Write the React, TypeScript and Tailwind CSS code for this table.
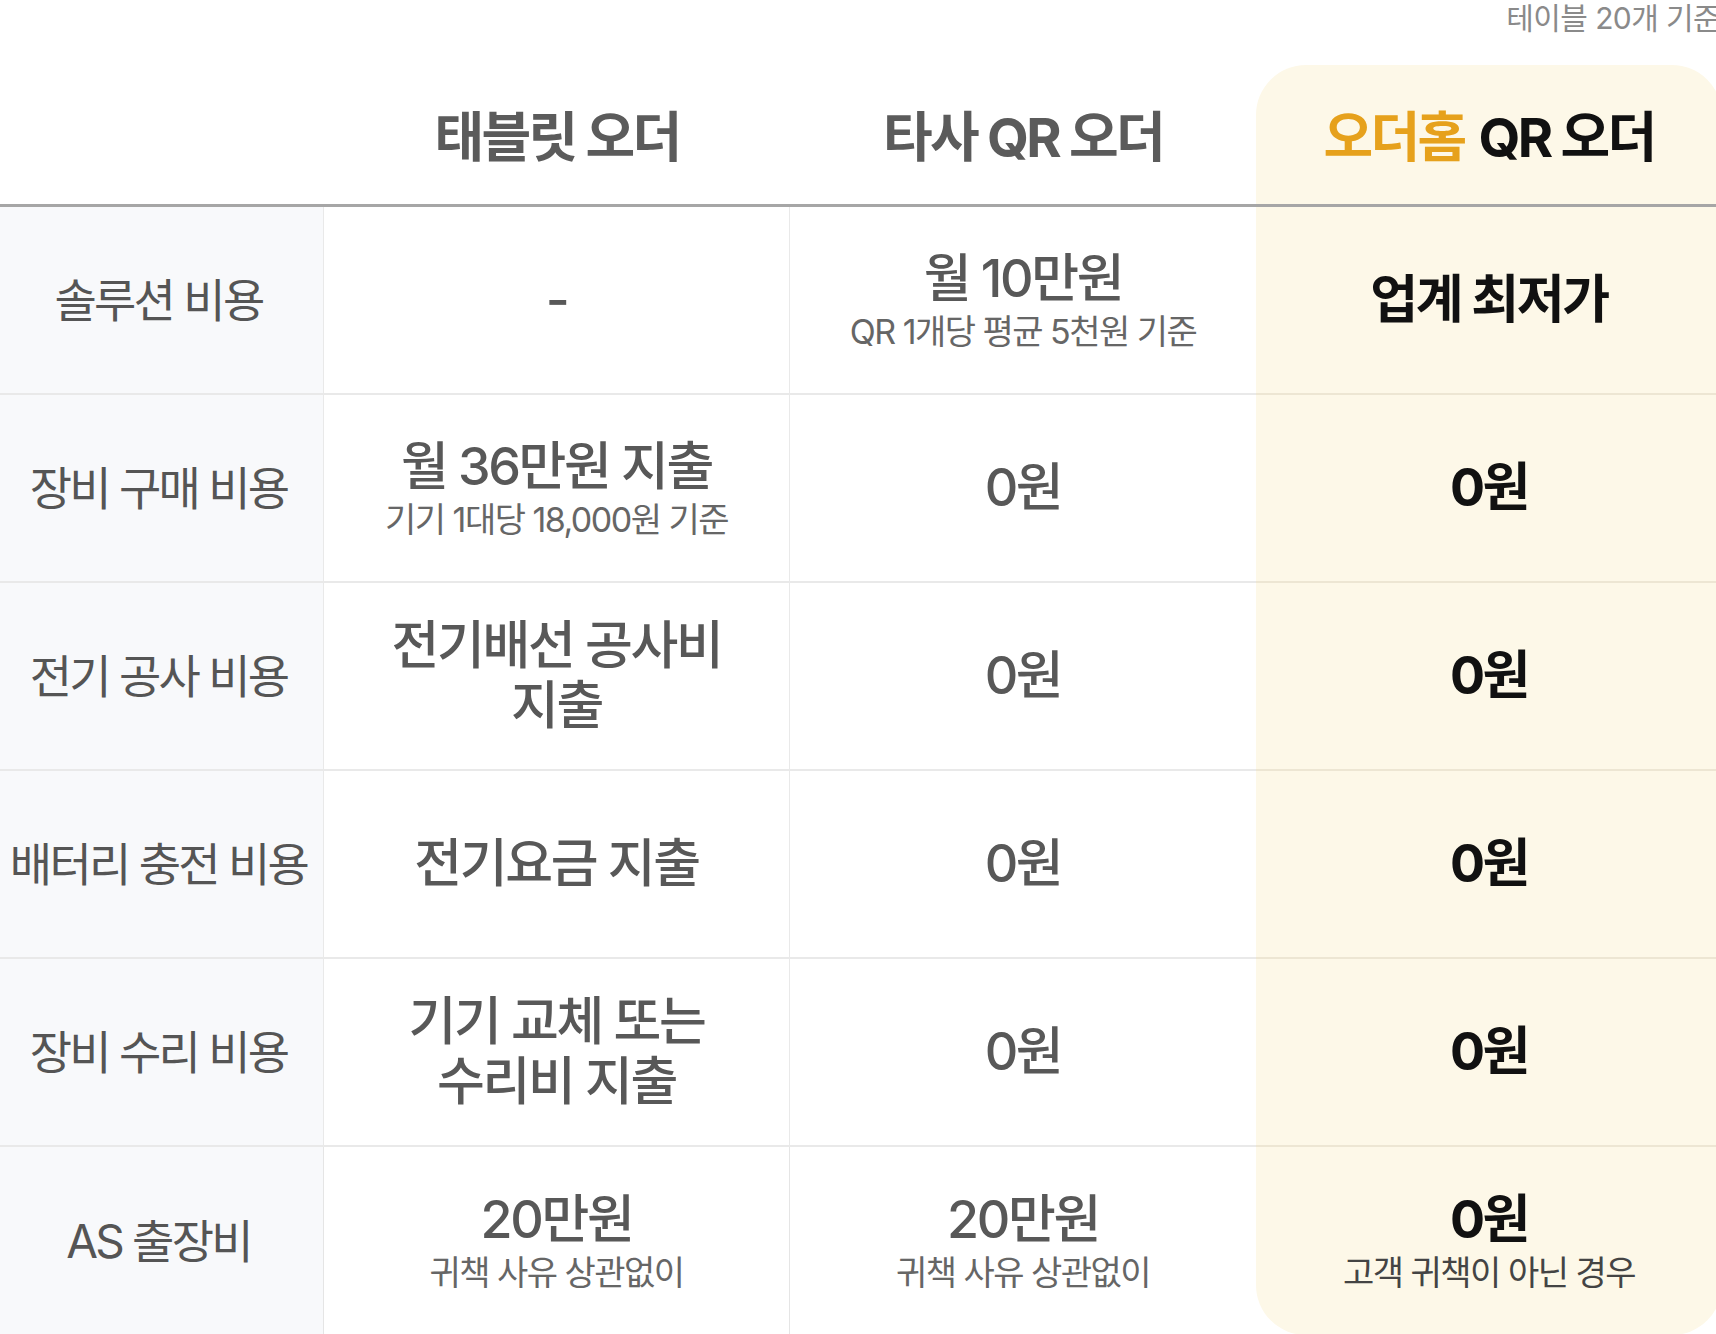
const font = { fontFamily: "Inter, 'Noto Sans CJK KR', sans-serif" };

type Cell = { main: string[]; sub?: string };

type Row = {
  label: string;
  tablet: Cell;
  other: Cell;
  ours: Cell;
};

const rows: Row[] = [
  {
    label: "솔루션 비용",
    tablet: { main: ["-"] },
    other: { main: ["월 10만원"], sub: "QR 1개당 평균 5천원 기준" },
    ours: { main: ["업계 최저가"] },
  },
  {
    label: "장비 구매 비용",
    tablet: { main: ["월 36만원 지출"], sub: "기기 1대당 18,000원 기준" },
    other: { main: ["0원"] },
    ours: { main: ["0원"] },
  },
  {
    label: "전기 공사 비용",
    tablet: { main: ["전기배선 공사비", "지출"] },
    other: { main: ["0원"] },
    ours: { main: ["0원"] },
  },
  {
    label: "배터리 충전 비용",
    tablet: { main: ["전기요금 지출"] },
    other: { main: ["0원"] },
    ours: { main: ["0원"] },
  },
  {
    label: "장비 수리 비용",
    tablet: { main: ["기기 교체 또는", "수리비 지출"] },
    other: { main: ["0원"] },
    ours: { main: ["0원"] },
  },
  {
    label: "AS 출장비",
    tablet: { main: ["20만원"], sub: "귀책 사유 상관없이" },
    other: { main: ["20만원"], sub: "귀책 사유 상관없이" },
    ours: { main: ["0원"], sub: "고객 귀책이 아닌 경우" },
  },
];

const Value = ({ cell, strong }: { cell: Cell; strong?: boolean }) => (
  <div className="flex flex-col items-center text-center">
    <div
      className={
        strong
          ? "text-[52px] font-bold leading-[60px] tracking-[-0.045em] text-[#111]"
          : "text-[52px] font-medium leading-[60px] tracking-[-0.045em] text-[#585858]"
      }
    >
      {cell.main.map((line) => (
        <div key={line}>{line}</div>
      ))}
    </div>
    {cell.sub && (
      <div
        className={
          strong
            ? "mt-[3px] text-[34px] leading-[40px] tracking-[-0.045em] text-[#444]"
            : "mt-[3px] text-[34px] leading-[40px] tracking-[-0.045em] text-[#666]"
        }
      >
        {cell.sub}
      </div>
    )}
  </div>
);

const App = () => {
  return (
    <div className="w-[1716px] h-[1334px] overflow-hidden bg-white" style={font}>
      <div className="w-[1722px]">
        <div className="flex h-[65px] justify-end">
          <span className="mr-[2px] text-[30px] leading-[36px] tracking-[-0.02em] text-[#8a8a8a]">
            테이블 20개 기준
          </span>
        </div>

        <div className="grid grid-cols-[324px_466px_466px_466px]">
          {/* header */}
          <div className="h-[142px] border-b-[3px] border-[#a6a6a6]" />
          <div className="flex h-[142px] items-center justify-center border-b-[3px] border-[#a6a6a6] pt-[6px] text-[54px] font-bold tracking-[-0.05em] text-[#5b5b5b]">
            태블릿 오더
          </div>
          <div className="flex h-[142px] items-center justify-center border-b-[3px] border-[#a6a6a6] pt-[6px] text-[54px] font-bold tracking-[-0.05em] text-[#5b5b5b]">
            타사 QR 오더
          </div>
          <div className="flex h-[142px] items-center justify-center rounded-t-[50px] border-b-[3px] border-[#a6a6a6] bg-[#fdf8e8] pt-[6px] text-[54px] font-bold tracking-[-0.05em] text-[#111]">
            <span className="text-[#e6a11c]">오더홈</span>
            <span className="ml-[14px]">QR 오더</span>
          </div>

          {rows.map((row, i) => {
            const last = i === rows.length - 1;
            const line = last ? "" : "border-b-2 border-[#e9e9e9]";
            return [
              <div
                key={row.label + "-l"}
                className={`flex h-[188px] items-center justify-center border-r border-[#e5e5e5] bg-[#f8f9fb] pr-[6px] text-[46px] tracking-[-0.06em] text-[#555] ${line}`}
              >
                {row.label}
              </div>,
              <div
                key={row.label + "-t"}
                className={`flex h-[188px] items-center justify-center border-r border-[#e5e5e5] ${line}`}
              >
                <Value cell={row.tablet} />
              </div>,
              <div
                key={row.label + "-o"}
                className={`flex h-[188px] items-center justify-center ${line}`}
              >
                <Value cell={row.other} />
              </div>,
              <div
                key={row.label + "-h"}
                className={`flex h-[188px] items-center justify-center bg-[#fdf8e8] ${
                  last ? "rounded-b-[50px]" : "border-b-2 border-[#ede6d3]"
                }`}
              >
                <Value cell={row.ours} strong />
              </div>,
            ];
          })}
        </div>
      </div>
    </div>
  );
};

export default App;
